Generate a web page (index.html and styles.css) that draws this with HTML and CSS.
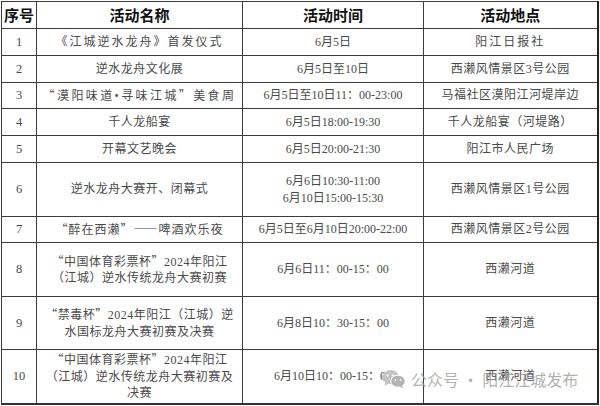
FILE: index.html
```html
<!DOCTYPE html>
<html lang="zh-CN">
<head>
<meta charset="utf-8">
<title>活动安排</title>
<link rel="stylesheet" href="styles.css">
</head>
<body>
<div class="page">
  <table class="sched">
    <colgroup>
      <col class="c-no"><col class="c-name"><col class="c-time"><col class="c-place">
    </colgroup>
    <thead>
      <tr class="h27"><th>序号</th><th>活动名称</th><th>活动时间</th><th>活动地点</th></tr>
    </thead>
    <tbody>
      <tr class="h27"><td class="no">1</td><td class="name wide">《江城逆水龙舟》首发仪式</td><td class="time">6月5日</td><td class="place wide">阳江日报社</td></tr>
      <tr class="h27"><td class="no">2</td><td class="name">逆水龙舟文化展</td><td class="time">6月5日至10日</td><td class="place">西濑风情景区3号公园</td></tr>
      <tr class="h26"><td class="no">3</td><td class="name mid"><span class="fw">“</span>漠阳味道•寻味江城<span class="fw">”</span>美食周</td><td class="time">6月5日至10日11：00-23:00</td><td class="place">马福社区漠阳江河堤岸边</td></tr>
      <tr class="h27"><td class="no">4</td><td class="name">千人龙船宴</td><td class="time">6月5日18:00-19:30</td><td class="place">千人龙船宴（河堤路）</td></tr>
      <tr class="h27"><td class="no">5</td><td class="name">开幕文艺晚会</td><td class="time">6月5日20:00-21:30</td><td class="place">阳江市人民广场</td></tr>
      <tr class="h54"><td class="no">6</td><td class="name">逆水龙舟大赛开、闭幕式</td><td class="time">6月6日10:30-11:00<br>6月10日15:00-15:30</td><td class="place">西濑风情景区1号公园</td></tr>
      <tr class="h26"><td class="no">7</td><td class="name mid7"><span class="fw">“</span>醉在西濑<span class="fw">”——</span>啤酒欢乐夜</td><td class="time">6月5日至6月10日20:00-22:00</td><td class="place">西濑风情景区2号公园</td></tr>
      <tr class="h54"><td class="no">8</td><td class="name"><span class="fw">“</span>中国体育彩票杯<span class="fw">”</span>2024年阳江<br>（江城）逆水传统龙舟大赛初赛</td><td class="time">6月6日11：00-15：00</td><td class="place">西濑河道</td></tr>
      <tr class="h53"><td class="no">9</td><td class="name"><span class="fw">“</span>禁毒杯<span class="fw">”</span>2024年阳江（江城）逆<br>水国标龙舟大赛初赛及决赛</td><td class="time">6月8日10：30-15：00</td><td class="place">西濑河道</td></tr>
      <tr class="h54"><td class="no">10</td><td class="name"><span class="fw">“</span>中国体育彩票杯<span class="fw">”</span>2024年阳江<br>（江城）逆水传统龙舟大赛初赛及<br>决赛</td><td class="time">6月10日10：00-15：00</td><td class="place">西濑河道</td></tr>
    </tbody>
  </table>
  <div class="wm">
    <svg class="wm-icon" width="26" height="20" viewBox="0 0 26 20">
      <ellipse cx="9.5" cy="8" rx="8.5" ry="7" fill="#c4c4c4"/>
      <path d="M4.5 12.5 L3.5 17 L8.5 14 Z" fill="#c4c4c4"/>
      <ellipse cx="17" cy="12.2" rx="7.2" ry="6" fill="#b3b3b3" stroke="#fff" stroke-width="1"/>
      <path d="M21 16.5 L22.5 19.5 L18.5 17.5 Z" fill="#b3b3b3"/>
      <circle cx="6.5" cy="6.5" r="1.1" fill="#fff"/>
      <circle cx="12" cy="6.5" r="1.1" fill="#fff"/>
      <circle cx="14.5" cy="11" r="0.9" fill="#fff"/>
      <circle cx="19.5" cy="11" r="0.9" fill="#fff"/>
    </svg>
    <span class="wm-text">公众号 · 阳江江城发布</span>
  </div>
</div>
</body>
</html>
```

FILE: styles.css
```css
html, body {
  margin: 0;
  padding: 0;
  background: #ffffff;
}

.page {
  position: relative;
  width: 600px;
  height: 406px;
  padding: 1px 0 0 1px;
  box-sizing: border-box;
  overflow: hidden;
}

.sched {
  border-collapse: collapse;
  table-layout: fixed;
  width: 596px;
  font-family: "Liberation Serif", "Noto Sans CJK SC", serif;
  font-size: 12px;
  color: #4a4a4a;
  border-right: 2px solid #222;
  border-bottom: 2px solid #333;
}

.c-no { width: 35px; }
.c-name { width: 206px; }
.c-time { width: 181px; }
.c-place { width: 174px; }

.sched th,
.sched td {
  border: 1px solid #3c3c3c;
  padding: 0;
  text-align: center;
  vertical-align: middle;
  line-height: 16.5px;
}

.sched th {
  font-family: "Noto Sans CJK SC", "Liberation Sans", sans-serif;
  font-weight: 700;
  font-size: 15px;
  color: #111;
  letter-spacing: 0;
}

.h27 { height: 27px; }
.h26 { height: 26px; }
.h54 { height: 54px; }
.h53 { height: 53px; }

.no {
  font-size: 12.5px;
}

.name,
.place {
  letter-spacing: 0.5px;
}

.wide {
  letter-spacing: 2px;
}

.mid {
  letter-spacing: 2.4px;
}

.mid7 {
  letter-spacing: 1px;
}

.time {
  letter-spacing: 0;
}

.fw {
  font-family: "Noto Sans CJK SC", sans-serif;
  font-feature-settings: "fwid";
}

.wm {
  position: absolute;
  left: 381px;
  top: 367px;
  display: flex;
  align-items: center;
  gap: 4px;
  pointer-events: none;
}

.wm-text {
  font-family: "Noto Sans CJK SC", "Noto Sans", sans-serif;
  font-size: 16px;
  color: rgba(150, 150, 150, 0.75);
  letter-spacing: 0;
  white-space: nowrap;
}
```
